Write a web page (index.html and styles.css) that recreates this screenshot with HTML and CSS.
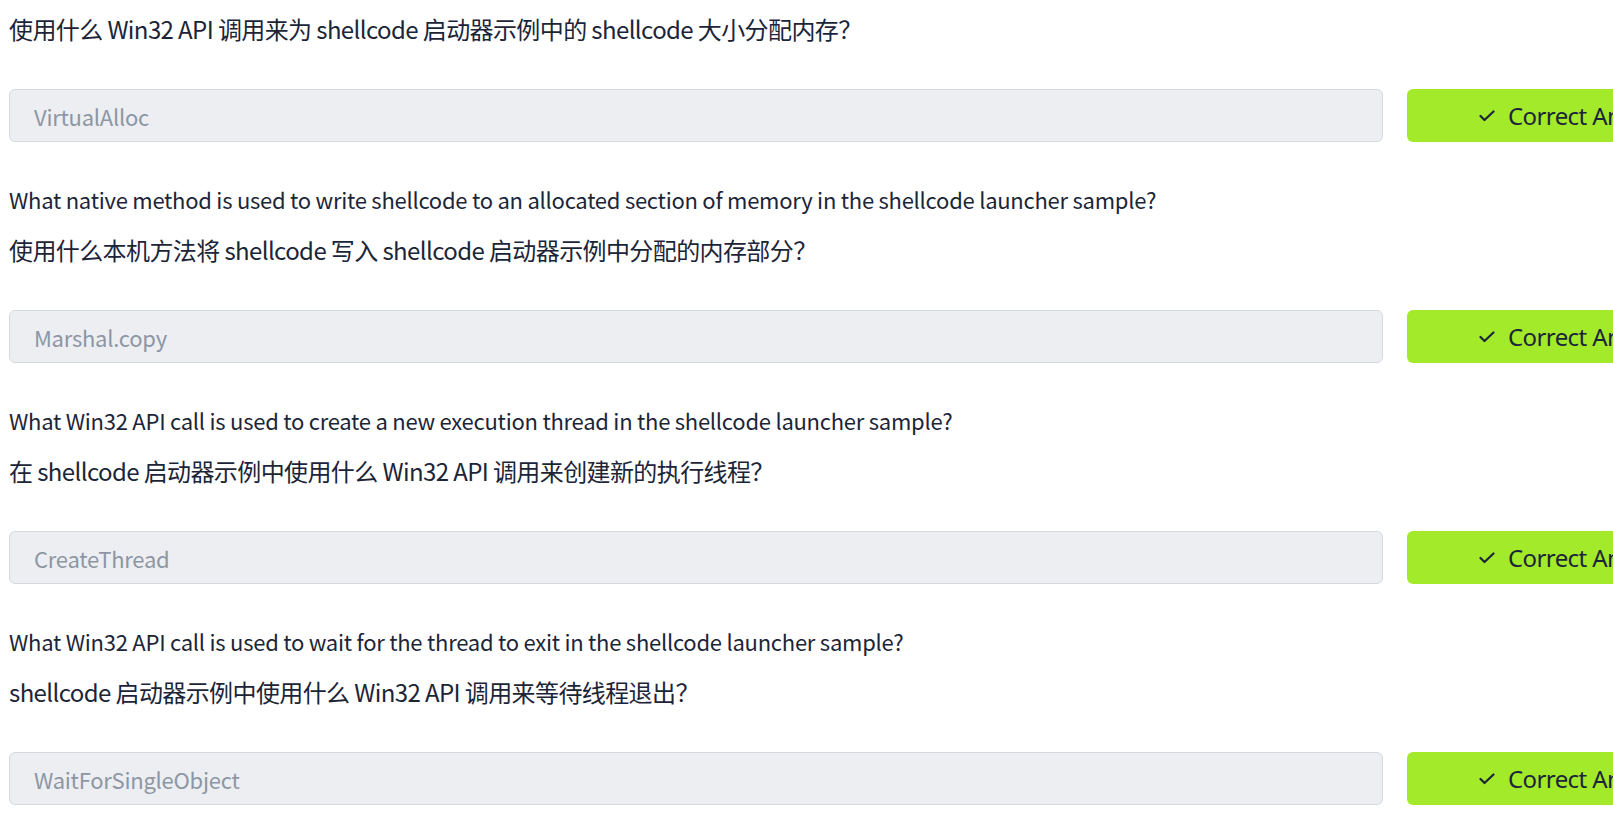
FILE: index.html
```html
<!DOCTYPE html>
<html lang="zh">
<head>
<meta charset="utf-8">
<title>Tasks</title>
<link rel="stylesheet" href="styles.css">
</head>
<body>
<main class="tasks">
  <section class="task">
    <p class="q-zh">使用什么 Win32 API 调用来为 shellcode 启动器示例中的 shellcode 大小分配内存？</p>
    <div class="answer-row">
      <input class="answer" type="text" readonly value="VirtualAlloc">
      <button class="btn-correct" type="button"><svg class="check" width="16" height="12" viewBox="0 0 16 12"><polyline points="1.5,6 5.5,10 14.5,1.5" fill="none" stroke="currentColor" stroke-width="2.2" stroke-linecap="round" stroke-linejoin="round"/></svg><span>Correct Answer</span></button>
    </div>
  </section>
  <section class="task">
    <p class="q-en">What native method is used to write shellcode to an allocated section of memory in the shellcode launcher sample?</p>
    <p class="q-zh">使用什么本机方法将 shellcode 写入 shellcode 启动器示例中分配的内存部分？</p>
    <div class="answer-row">
      <input class="answer" type="text" readonly value="Marshal.copy">
      <button class="btn-correct" type="button"><svg class="check" width="16" height="12" viewBox="0 0 16 12"><polyline points="1.5,6 5.5,10 14.5,1.5" fill="none" stroke="currentColor" stroke-width="2.2" stroke-linecap="round" stroke-linejoin="round"/></svg><span>Correct Answer</span></button>
    </div>
  </section>
  <section class="task">
    <p class="q-en">What Win32 API call is used to create a new execution thread in the shellcode launcher sample?</p>
    <p class="q-zh">在 shellcode 启动器示例中使用什么 Win32 API 调用来创建新的执行线程？</p>
    <div class="answer-row">
      <input class="answer" type="text" readonly value="CreateThread">
      <button class="btn-correct" type="button"><svg class="check" width="16" height="12" viewBox="0 0 16 12"><polyline points="1.5,6 5.5,10 14.5,1.5" fill="none" stroke="currentColor" stroke-width="2.2" stroke-linecap="round" stroke-linejoin="round"/></svg><span>Correct Answer</span></button>
    </div>
  </section>
  <section class="task">
    <p class="q-en">What Win32 API call is used to wait for the thread to exit in the shellcode launcher sample?</p>
    <p class="q-zh">shellcode 启动器示例中使用什么 Win32 API 调用来等待线程退出？</p>
    <div class="answer-row">
      <input class="answer" type="text" readonly value="WaitForSingleObject">
      <button class="btn-correct" type="button"><svg class="check" width="16" height="12" viewBox="0 0 16 12"><polyline points="1.5,6 5.5,10 14.5,1.5" fill="none" stroke="currentColor" stroke-width="2.2" stroke-linecap="round" stroke-linejoin="round"/></svg><span>Correct Answer</span></button>
    </div>
  </section>
</main>
</body>
</html>
```

FILE: styles.css
```css
html, body {
  overflow: hidden;
}
body {
  margin: 0;
  padding: 11px 0 0 9px;
  background: #ffffff;
  color: #1c2538;
  font-family: "Noto Sans CJK SC", "Noto Sans", sans-serif;
  font-size: 24px;
}
.tasks {
  display: flex;
  flex-direction: column;
  gap: 39px;
}
.task p {
  margin: 0;
  line-height: 36px;
  white-space: nowrap;
}
.task .q-en {
  margin-bottom: 15px;
  font-size: 22px;
  letter-spacing: -0.25px;
}
.task .q-zh {
  font-size: 24px;
  letter-spacing: -0.6px;
}
.answer-row {
  display: grid;
  grid-template-columns: 1374px auto;
  column-gap: 24px;
  margin-top: 42px;
}
.answer {
  box-sizing: border-box;
  height: 53px;
  width: 100%;
  margin: 0;
  padding: 0 0 0 24px;
  border: 1px solid #d5d9e0;
  border-radius: 6px;
  background: #eceef2;
  color: #8d96a4;
  font-family: "Noto Sans CJK SC", "Noto Sans", sans-serif;
  font-size: 22px;
  letter-spacing: -0.25px;
  outline: none;
}
.btn-correct {
  display: flex;
  align-items: center;
  gap: 13px;
  height: 53px;
  margin: 0;
  padding: 0 72px;
  border: none;
  border-radius: 6px;
  background: #a3ea2a;
  color: #1c2538;
  font-family: "Noto Sans", sans-serif;
  font-size: 24px;
  letter-spacing: -0.6px;
  white-space: nowrap;
}
.check {
  flex: none;
}
```
